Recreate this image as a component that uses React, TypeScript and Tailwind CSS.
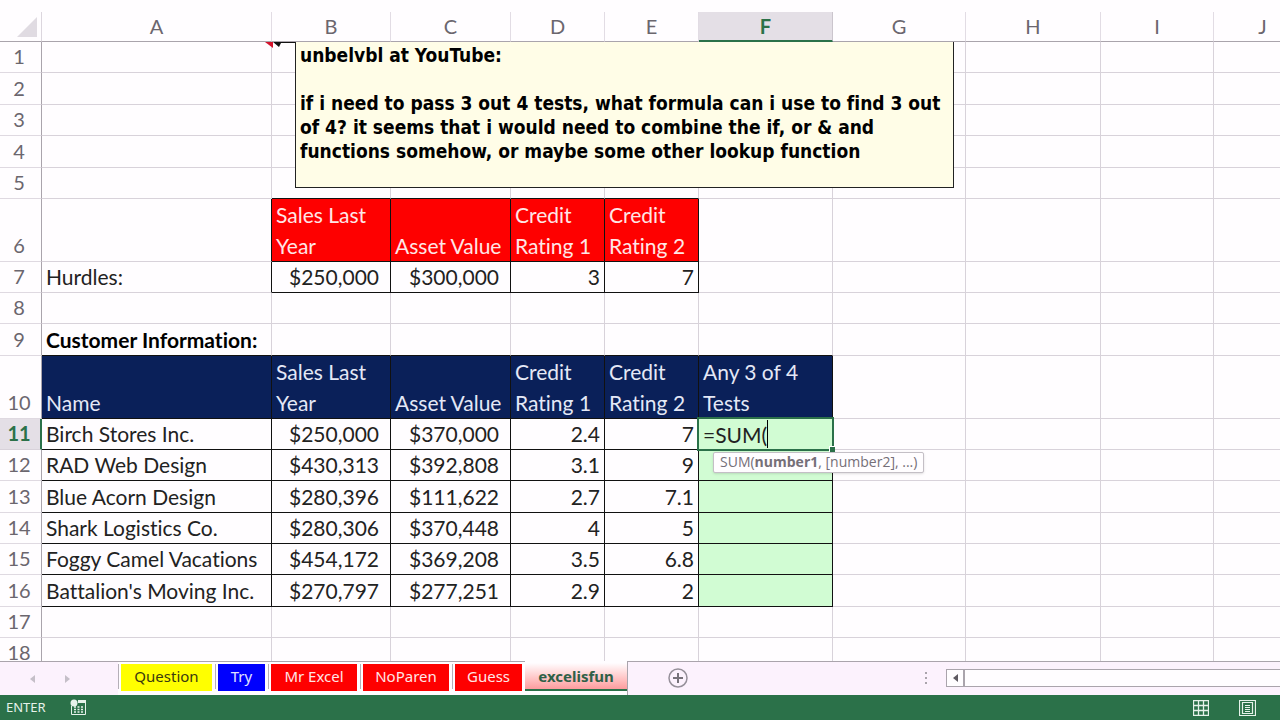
type Cell = { text?: string; align?: "money" | "right"; style?: string };

type Row = { n: number; h: string; cells?: Cell[] };

const columns = [
  { name: "A", w: "w-[230px]" },
  { name: "B", w: "w-[119px]" },
  { name: "C", w: "w-[120px]" },
  { name: "D", w: "w-[94px]" },
  { name: "E", w: "w-[94px]" },
  { name: "F", w: "w-[134px]" },
  { name: "G", w: "w-[133px]" },
  { name: "H", w: "w-[135px]" },
  { name: "I", w: "w-[113px]" },
  { name: "J", w: "w-[98px]" },
];

const red = "bg-[#fe0000] text-[#ffe6e6]";
const navy = "bg-[#0a2059] text-[#e4e8f6]";
const green = "bg-[#d1fcd3]";

const customer = (name: string, sales: string, asset: string, r1: string, r2: string): Cell[] => [
  { text: name },
  { text: sales, align: "money" },
  { text: asset, align: "money" },
  { text: r1, align: "right" },
  { text: r2, align: "right" },
  { style: green },
];

const rows: Row[] = [
  { n: 1, h: "h-[31px]" },
  { n: 2, h: "h-[32px]" },
  { n: 3, h: "h-[31px]" },
  { n: 4, h: "h-[32px]" },
  { n: 5, h: "h-[31px]" },
  {
    n: 6,
    h: "h-[63px]",
    cells: [
      {},
      { text: "Sales Last Year", style: red },
      { text: "Asset Value", style: red },
      { text: "Credit Rating 1", style: red },
      { text: "Credit Rating 2", style: red },
    ],
  },
  {
    n: 7,
    h: "h-[31px]",
    cells: [
      { text: "Hurdles:" },
      { text: "$250,000", align: "money" },
      { text: "$300,000", align: "money" },
      { text: "3", align: "right" },
      { text: "7", align: "right" },
    ],
  },
  { n: 8, h: "h-[31px]" },
  { n: 9, h: "h-[32px]", cells: [{ text: "Customer Information:", style: "font-bold" }] },
  {
    n: 10,
    h: "h-[63px]",
    cells: [
      { text: "Name", style: navy },
      { text: "Sales Last Year", style: navy },
      { text: "Asset Value", style: navy },
      { text: "Credit Rating 1", style: navy },
      { text: "Credit Rating 2", style: navy },
      { text: "Any 3 of 4 Tests", style: navy },
    ],
  },
  { n: 11, h: "h-[31px]", cells: customer("Birch Stores Inc.", "$250,000", "$370,000", "2.4", "7") },
  { n: 12, h: "h-[31px]", cells: customer("RAD Web Design", "$430,313", "$392,808", "3.1", "9") },
  { n: 13, h: "h-[32px]", cells: customer("Blue Acorn Design", "$280,396", "$111,622", "2.7", "7.1") },
  { n: 14, h: "h-[31px]", cells: customer("Shark Logistics Co.", "$280,306", "$370,448", "4", "5") },
  { n: 15, h: "h-[31px]", cells: customer("Foggy Camel Vacations", "$454,172", "$369,208", "3.5", "6.8") },
  { n: 16, h: "h-[32px]", cells: customer("Battalion's Moving Inc.", "$270,797", "$277,251", "2.9", "2") },
  { n: 17, h: "h-[31px]" },
  { n: 18, h: "h-[31px]" },
];

const sheets = [
  { name: "Question", style: "bg-[#ffff00] text-[#3a3a10]", w: "w-[91px]" },
  { name: "Try", style: "bg-[#0000fe] text-[#e2e2ff]", w: "w-[47px]" },
  { name: "Mr Excel", style: "bg-[#fe0000] text-[#ffe6e6]", w: "w-[86px]" },
  { name: "NoParen", style: "bg-[#fe0000] text-[#ffe6e6]", w: "w-[86px]" },
  { name: "Guess", style: "bg-[#fe0000] text-[#ffe6e6]", w: "w-[67px]" },
];

// cells inside one of the two bordered tables
function boxed(n: number, c: number) {
  if (n === 6 || n === 7) return c >= 1 && c <= 4;
  return n >= 10 && n <= 16 && c >= 0 && c <= 5;
}

function Note() {
  return (
    <>
      <svg className="absolute top-0 left-[222px] z-10" width="32" height="6" viewBox="0 0 32 6">
        <path d="M1 0h8v6z" fill="#d3122c" />
        <path d="M9 0h22v1H17l-2 4z" fill="#111" />
      </svg>
      <div className="absolute top-0 left-[253px] z-10 w-[659px] border border-t-0 border-[#222] bg-[#fffde7] pt-px pb-6 pl-1 font-['DejaVu_Sans_Condensed','Noto_Sans',sans-serif] text-[19px] leading-6 font-bold whitespace-nowrap text-black">
        <p>unbelvbl at YouTube:</p>
        <br />
        <p>
          if i need to pass 3 out 4 tests, what formula can i use to find 3 out
          <br />
          of 4? it seems that i would need to combine the if, or &amp; and
          <br />
          functions somehow, or maybe some other lookup function
        </p>
      </div>
    </>
  );
}

function ActiveCell() {
  return (
    <>
      <div className="absolute -inset-[2px] z-10 flex items-center border-2 border-[#2b7149] pl-1">
        <input
          aria-label="F11 formula"
          defaultValue="=SUM("
          className="field-sizing-content h-7 bg-transparent text-[#222] outline-none"
        />
        <span className="h-7 w-px bg-black" />
        <span className="absolute -right-[3px] -bottom-[3px] size-[6px] border-t border-l border-white bg-[#2b7149]" />
      </div>
      <div className="absolute top-[33px] left-[14px] z-20 h-[21px] rounded-xs border border-[#c4bfc6] bg-[#fffdff] px-[6px] font-['Open_Sans',sans-serif] text-sm leading-[18px] whitespace-nowrap text-[#756f78] shadow">
        SUM(<b>number1</b>, [number2], ...)
      </div>
    </>
  );
}

function Grid() {
  return (
    <table className="w-full table-fixed border-separate border-spacing-0 text-[21px] [font-variant-ligatures:none]">
      <colgroup>
        <col className="w-[42px]" />
        {columns.map((col) => (
          <col key={col.name} className={col.w} />
        ))}
        <col />
      </colgroup>
      <thead>
        <tr className="h-[30px] text-xl text-[#6b666e]">
          <th className="border-r border-b border-r-[#dcd6de] border-b-[#aaa4ac] p-0">
            <svg className="mr-1 ml-auto" width="20" height="20" viewBox="0 0 20 20">
              <path d="M20 0v20H0z" fill="#e0dbe2" />
            </svg>
          </th>
          {columns.map((col) => (
            <th
              key={col.name}
              scope="col"
              className={
                col.name === "F"
                  ? "border-r border-b-2 border-r-[#cbc5cd] border-b-[#2b7149] bg-[#e4dfe6] p-0 align-top leading-7 font-bold text-[#2b7149]"
                  : "border-r border-b border-r-[#e2dce4] border-b-[#aaa4ac] p-0 align-top leading-7 font-normal"
              }
            >
              {col.name}
            </th>
          ))}
          <th className="border-b border-b-[#aaa4ac] p-0" />
        </tr>
      </thead>
      <tbody>
        {rows.map((row) => (
          <tr key={row.n} className={row.h}>
            <th
              scope="row"
              className={
                row.n === 11
                  ? "border-r-2 border-b border-r-[#2b7149] border-b-[#d8d2da] bg-[#e4dfe6] p-0 pr-[2px] pb-px align-bottom text-xl leading-[29px] font-bold text-[#2b7149]"
                  : "border-r border-b border-r-[#aaa4ac] border-b-[#dfd9e1] p-0 pr-[3px] pb-px align-bottom text-xl leading-[29px] font-normal text-[#6b666e]"
              }
            >
              {row.n}
            </th>
            {columns.map((col, c) => {
              const cell = row.cells?.[c] ?? {};
              const right = boxed(row.n, c) || boxed(row.n, c + 1) ? "border-r-[#111]" : "border-r-[#d8d2da]";
              const bottom = boxed(row.n, c) || boxed(row.n + 1, c) ? "border-b-[#111]" : "border-b-[#d8d2da]";
              const align =
                cell.align === "money"
                  ? "text-right pl-1 pr-[11px]"
                  : cell.align === "right"
                    ? "text-right pl-1 pr-1"
                    : "text-left pl-1";
              const line =
                row.n === 6 || row.n === 10 ? "leading-[31px] py-0" : "leading-[29px] pt-0 pb-px whitespace-nowrap";
              return (
                <td
                  key={col.name}
                  className={`relative border-r border-b align-bottom ${right} ${bottom} ${align} ${line} ${cell.style ?? "text-[#222]"}`}
                >
                  {cell.text}
                  {row.n === 1 && c === 0 && <Note />}
                  {row.n === 11 && c === 5 && <ActiveCell />}
                </td>
              );
            })}
            <td className="border-b border-b-[#d8d2da] p-0" />
          </tr>
        ))}
      </tbody>
    </table>
  );
}

function SheetBar() {
  return (
    <div className="flex h-[34px] shrink-0 bg-[#fcf2fd] font-['Noto_Sans',sans-serif] text-[15px]">
      <div className="flex w-[118px] items-center gap-7 border-t border-[#aaa4ac] pl-[30px]">
        <button aria-label="Previous sheet">
          <svg width="6" height="8" viewBox="0 0 6 8">
            <path d="M5 0v8L0 4z" fill="#c5bfc8" />
          </svg>
        </button>
        <button aria-label="Next sheet">
          <svg width="6" height="8" viewBox="0 0 6 8">
            <path d="M1 0v8l5-4z" fill="#c5bfc8" />
          </svg>
        </button>
      </div>
      <nav className="flex bg-[#fffdff]">
        {sheets.map((s) => (
          <div key={s.name} className="flex gap-[2px] border-t border-[#aaa4ac] pt-[2px] pr-[3px]">
            <span className="h-[25px] w-px bg-[#b5afb8]" />
            <button className={`h-[27px] pb-[2px] ${s.w} ${s.style}`}>{s.name}</button>
          </div>
        ))}
        <div className="border-r border-[#aaa4ac] pt-[2px]">
          <button className="h-[28px] w-[102px] border-b-2 border-[#2b7149] bg-linear-to-b from-[#fffdff] to-[#fc9c9e] font-bold text-[#2f6047]">
            excelisfun
          </button>
        </div>
      </nav>
      <div className="flex flex-1 items-center border-t border-[#aaa4ac] pb-px pl-10">
        <button aria-label="New sheet">
          <svg width="20" height="20" viewBox="0 0 20 20" fill="none" stroke="#77727a">
            <circle cx="10" cy="10" r="9" stroke="#96909a" strokeWidth="1.5" />
            <path d="M10 5v10M5 10h10" strokeWidth="2" />
          </svg>
        </button>
        <div className="ml-auto flex items-center">
          <svg className="mr-[18px]" width="3" height="13" viewBox="0 0 3 13">
            <path d="M0 0h2v2H0zM0 5h2v2H0zM0 10h2v2H0z" fill="#aaa4ac" />
          </svg>
          <div className="flex h-[18px] w-[334px] border border-r-0 border-[#aaa4ac] bg-[#fffdff]">
            <button
              aria-label="Scroll left"
              className="flex w-[18px] items-center justify-center border-r-2 border-[#aaa4ac]"
            >
              <svg width="5" height="8" viewBox="0 0 5 8">
                <path d="M5 0v8L0 4z" fill="#5f5a62" />
              </svg>
            </button>
          </div>
        </div>
      </div>
    </div>
  );
}

function StatusBar() {
  return (
    <footer className="flex h-[25px] shrink-0 items-center bg-[#2b7149] pr-6 pl-[6px] font-['Noto_Sans',sans-serif] text-[13px] text-[#e6f2ea]">
      <span>ENTER</span>
      <button aria-label="Record macro" className="ml-6">
        <svg width="17" height="17" viewBox="0 0 17 17" fill="none">
          <path d="M1.5 7v8.5h14V2H8" stroke="#e6f2ea" />
          <path d="M8 1h8v3H8z" fill="#e6f2ea" />
          <path
            d="M4 8h2M7.500 8h2M11 8h2M4 10.500h2M7.500 10.500h2M11 10.500h2M4 13h2M7.500 13h2M11 13h2"
            stroke="#e6f2ea"
            strokeWidth="1.5"
          />
          <circle cx="4" cy="4" r="3.500" fill="#e6f2ea" />
        </svg>
      </button>
      <button aria-label="Normal view" className="ml-auto">
        <svg width="16" height="16" viewBox="0 0 16 16" fill="none" stroke="#e6f2ea" strokeWidth="1.300">
          <path d="M.5.5h15v15H.5zM5.500 0v16M10.500 0v16M0 5.500h16M0 10.500h16" />
        </svg>
      </button>
      <button aria-label="Page layout" className="ml-[30px]">
        <svg width="17" height="16" viewBox="0 0 17 16" fill="none" stroke="#e6f2ea" strokeWidth="1.200">
          <path d="M.5.5h16v15H.5zM3.500 2.500h10v11h-10zM6 5.500h5M6 7.500h5M6 9.500h5M6 11.500h5" />
        </svg>
      </button>
    </footer>
  );
}

export default function App() {
  return (
    <div className="flex h-screen flex-col bg-[#fffdff] font-['Lato',sans-serif]">
      <main className="min-h-0 flex-1 overflow-hidden pt-3">
        <Grid />
      </main>
      <SheetBar />
      <StatusBar />
    </div>
  );
}
